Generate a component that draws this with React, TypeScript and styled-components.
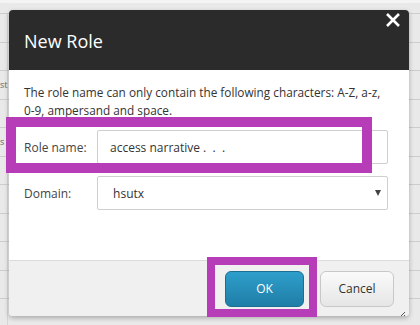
import React from "react";
import styled, { createGlobalStyle } from "styled-components";

const Global = createGlobalStyle`
  html, body { margin: 0; padding: 0; }
  body { background: #e8e8e8; font-family: "Open Sans", "Liberation Sans", sans-serif; }
`;

const Page = styled.div`
  position: relative;
  width: 420px;
  height: 325px;
  overflow: hidden;
  background: #e9e9e9;
  border-top: 3px solid #f4f4f4;
  box-sizing: border-box;
`;

const Table = styled.div`
  display: flex;
  flex-direction: column;
  padding-top: 10px;
`;

const TRow = styled.div`
  height: 28.5px;
  border-top: 1px solid #cdcdcd;
  box-sizing: border-box;
  display: flex;
  align-items: center;
  font-size: 9px;
  color: #666;
`;

const LeftCol = styled.div`
  width: 8px;
  height: 100%;
  border-right: 1px solid #d6d6d6;
  box-sizing: border-box;
  display: flex;
  align-items: center;
  justify-content: flex-start;
  white-space: nowrap;
`;

const Dialog = styled.div`
  position: absolute;
  left: 9px;
  top: 7px;
  width: 400px;
  height: 306px;
  display: flex;
  flex-direction: column;
  border-radius: 4px;
  overflow: hidden;
  background: #fff;
  box-shadow: 0 2px 5px rgba(0, 0, 0, 0.28);
`;

const Header = styled.div`
  height: 60px;
  background: #2b2b2b;
  display: flex;
  align-items: center;
  padding: 0 15px;
  position: relative;
`;

const Title = styled.h1`
  margin: 0;
  font-weight: 400;
  font-size: 18px;
  color: #fff;
  margin-top: 2px;
`;

const Close = styled.div`
  position: absolute;
  right: 8px;
  top: 1px;
  width: 16px;
  height: 16px;
`;

const Body = styled.div`
  flex: 1;
  padding: 13px 15px 0 15px;
  display: flex;
  flex-direction: column;
  color: #333;
`;

const Note = styled.p`
  margin: 0;
  font-size: 11.8px;
  line-height: 18px;
`;

const NoBreak = styled.span`
  white-space: nowrap;
`;

const FieldRow = styled.div<{ $mt: number }>`
  display: flex;
  align-items: center;
  margin-top: ${(p) => p.$mt}px;
`;

const Label = styled.div`
  width: 73px;
  font-size: 12px;
  color: #444;
`;

const Input = styled.div`
  flex: 1;
  height: 34px;
  border: 1px solid #cfcfcf;
  border-radius: 2px;
  box-sizing: border-box;
  display: flex;
  align-items: center;
  padding: 0 12px;
  font-size: 12px;
  color: #333;
  position: relative;
  margin-right: 6px;
  white-space: pre;
`;

const Caret = styled.span`
  position: absolute;
  right: 6px;
  top: 13px;
  width: 0;
  height: 0;
  border-left: 3px solid transparent;
  border-right: 3px solid transparent;
  border-top: 6px solid #444;
`;

const Footer = styled.div`
  height: 55px;
  background: #f0f0f0;
  border-top: 1px solid #dcdcdc;
  display: flex;
  align-items: center;
  justify-content: flex-end;
  gap: 16px;
  padding-right: 15px;
  position: relative;
`;

const Button = styled.button<{ $primary?: boolean }>`
  height: 36px;
  border-radius: 6px;
  font-family: "Open Sans", "Liberation Sans", sans-serif;
  font-size: 12px;
  cursor: pointer;
  ${(p) =>
    p.$primary
      ? `
    width: 79px;
    color: #fff;
    border: 1px solid #1a6f93;
    background: linear-gradient(#2e9ecb, #1f7ea7);
  `
      : `
    width: 74px;
    color: #333;
    border: 1px solid #c8c8c8;
    background: linear-gradient(#fafafa, #e6e6e6);
  `}
`;

const Grip = styled.div`
  position: absolute;
  right: 3px;
  bottom: 2px;
  width: 10px;
  height: 10px;
`;

const Highlight = styled.div<{ $l: number; $t: number; $w: number; $h: number; $b: number }>`
  position: absolute;
  left: ${(p) => p.$l}px;
  top: ${(p) => p.$t}px;
  width: ${(p) => p.$w}px;
  height: ${(p) => p.$h}px;
  border: ${(p) => p.$b}px solid #b63db7;
  box-sizing: border-box;
  pointer-events: none;
`;

const rows = ["", "", "st", "", "s", "", "", "", "", "", "", ""];

export default function App() {
  return (
    <>
      <Global />
      <Page>
        <Table>
          {rows.map((t, i) => (
            <TRow key={i}>
              <LeftCol>{t}</LeftCol>
            </TRow>
          ))}
        </Table>
        <Dialog>
          <Header>
            <Title>New Role</Title>
            <Close>
              <svg width="16" height="16" viewBox="0 0 16 16">
                <path d="M2 2 L14 14 M14 2 L2 14" stroke="#fff" strokeWidth="2.6" strokeLinecap="butt" />
              </svg>
            </Close>
          </Header>
          <Body>
            <Note>
              The role name can only contain the following characters: <NoBreak>A-Z,</NoBreak>{" "}
              <NoBreak>a-z,</NoBreak> <NoBreak>0-9,</NoBreak> ampersand and space.
            </Note>
            <FieldRow $mt={11}>
              <Label>Role name:</Label>
              <Input>access narrative .  .  .</Input>
            </FieldRow>
            <FieldRow $mt={12}>
              <Label>Domain:</Label>
              <Input>
                {" hsutx"}
                <Caret />
              </Input>
            </FieldRow>
          </Body>
          <Footer>
            <Button $primary>OK</Button>
            <Button>Cancel</Button>
            <Grip>
              <svg width="10" height="10" viewBox="0 0 10 10">
                <path d="M9 1 L1 9 M9 4 L4 9 M9 7 L7 9" stroke="#555" strokeWidth="1" />
              </svg>
            </Grip>
          </Footer>
        </Dialog>
        <Highlight $l={6} $t={114} $w={366} $h={56} $b={10} />
        <Highlight $l={207} $t={254} $w={110} $h={60} $b={8} />
      </Page>
    </>
  );
}
